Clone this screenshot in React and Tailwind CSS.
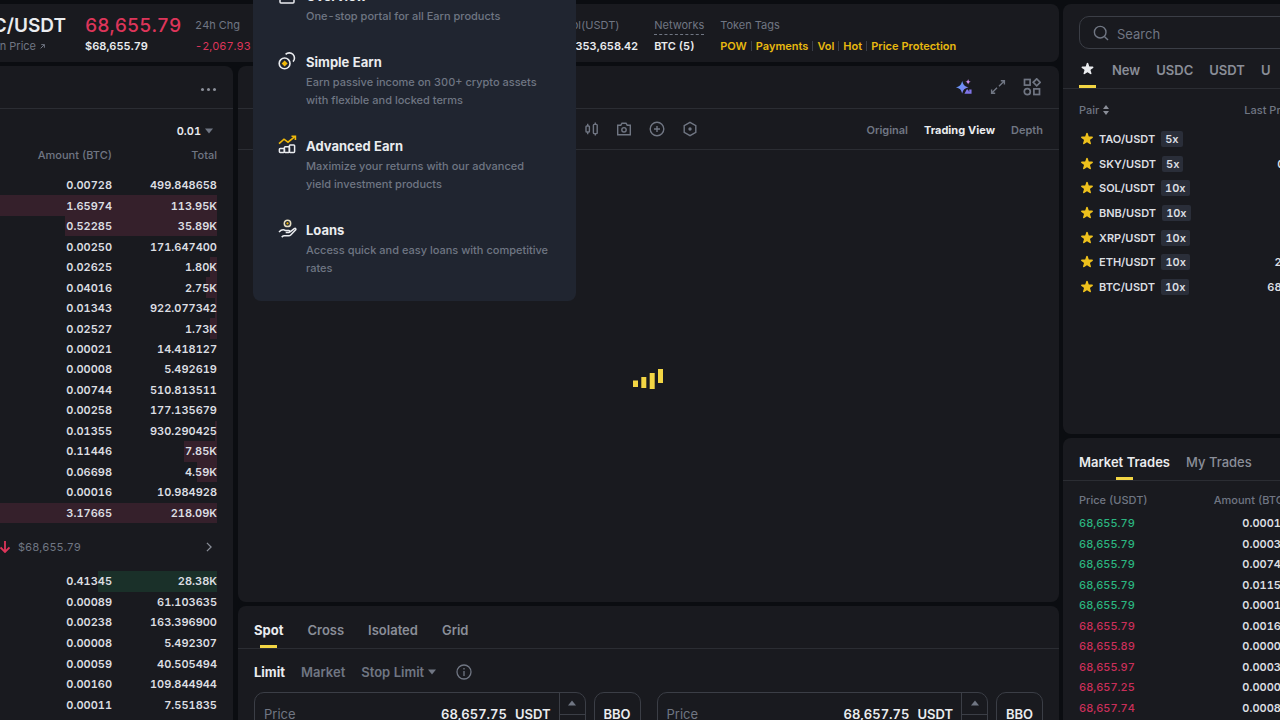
import { useState } from "react";
import { HiStar } from "react-icons/hi";

const earnMenu = [
  { title: "Overview", desc: "One-stop portal for all Earn products", icon: OverviewIcon },
  { title: "Simple Earn", desc: "Earn passive income on 300+ crypto assets with flexible and locked terms", icon: CoinsIcon },
  { title: "Advanced Earn", desc: "Maximize your returns with our advanced yield investment products", icon: GrowthIcon },
  { title: "Loans", desc: "Access quick and easy loans with competitive rates", icon: LoanIcon },
];

const asks = [
  { amount: "0.00728", total: "499.848658", depth: 0 },
  { amount: "1.65974", total: "113.95K", depth: 100 },
  { amount: "0.52285", total: "35.89K", depth: 70 },
  { amount: "0.00250", total: "171.647400", depth: 0 },
  { amount: "0.02625", total: "1.80K", depth: 3 },
  { amount: "0.04016", total: "2.75K", depth: 5 },
  { amount: "0.01343", total: "922.077342", depth: 1 },
  { amount: "0.02527", total: "1.73K", depth: 3 },
  { amount: "0.00021", total: "14.418127", depth: 0 },
  { amount: "0.00008", total: "5.492619", depth: 0 },
  { amount: "0.00744", total: "510.813511", depth: 0 },
  { amount: "0.00258", total: "177.135679", depth: 0 },
  { amount: "0.01355", total: "930.290425", depth: 1 },
  { amount: "0.11446", total: "7.85K", depth: 15 },
  { amount: "0.06698", total: "4.59K", depth: 9 },
  { amount: "0.00016", total: "10.984928", depth: 0 },
  { amount: "3.17665", total: "218.09K", depth: 100 },
];

const bids = [
  { amount: "0.41345", total: "28.38K", depth: 55 },
  { amount: "0.00089", total: "61.103635", depth: 0 },
  { amount: "0.00238", total: "163.396900", depth: 0 },
  { amount: "0.00008", total: "5.492307", depth: 0 },
  { amount: "0.00059", total: "40.505494", depth: 0 },
  { amount: "0.00160", total: "109.844944", depth: 0 },
  { amount: "0.00011", total: "7.551835", depth: 0 },
];

const pairs = [
  { name: "TAO/USDT", lever: "5x", price: "312.4" },
  { name: "SKY/USDT", lever: "5x", price: "0.07246" },
  { name: "SOL/USDT", lever: "10x", price: "84.12" },
  { name: "BNB/USDT", lever: "10x", price: "627.31" },
  { name: "XRP/USDT", lever: "10x", price: "1.4102" },
  { name: "ETH/USDT", lever: "10x", price: "2,013.45" },
  { name: "BTC/USDT", lever: "10x", price: "68,655.79" },
];

const trades = [
  { price: "68,655.79", amount: "0.00010", up: true },
  { price: "68,655.79", amount: "0.00030", up: true },
  { price: "68,655.79", amount: "0.00744", up: true },
  { price: "68,655.79", amount: "0.01150", up: true },
  { price: "68,655.79", amount: "0.00011", up: true },
  { price: "68,655.79", amount: "0.00164", up: false },
  { price: "68,655.89", amount: "0.00008", up: false },
  { price: "68,655.97", amount: "0.00030", up: false },
  { price: "68,657.25", amount: "0.00008", up: false },
  { price: "68,657.74", amount: "0.00080", up: false },
];

const tags = ["POW", "Payments", "Vol", "Hot", "Price Protection"];

function OverviewIcon() {
  return (
    <svg viewBox="0 0 20 20" className="size-5" fill="none" stroke="#eaecef" strokeWidth="1.5">
      <rect x="3" y="3" width="14" height="15" rx="1" />
      <path d="M6 8h8M6 12h8" stroke="#f0b90b" />
    </svg>
  );
}

function CoinsIcon() {
  return (
    <svg viewBox="0 0 20 20" className="size-5" fill="none" stroke="#eaecef" strokeWidth="1.6">
      <path d="M8.6 3.4A5 5 0 1 1 16 10.6" />
      <circle cx="7.6" cy="12.4" r="5.4" />
      <path d="M7.6 9.4 10.6 12.4 7.6 15.4 4.6 12.4z" fill="#f0b90b" stroke="none" />
    </svg>
  );
}

function GrowthIcon() {
  return (
    <svg viewBox="0 0 20 20" className="size-5" fill="none" stroke="#eaecef" strokeWidth="1.5">
      <path d="M2 8.6 7 4.2 11 7.2 17.6 1.8" stroke="#f0b90b" strokeWidth="1.6" />
      <path d="M14.5 1.2H18.4V5" stroke="#f0b90b" strokeWidth="1.6" />
      <rect x="2.4" y="13.4" width="5" height="4" rx=".8" />
      <rect x="7.4" y="11.8" width="5" height="5.6" rx=".8" />
      <rect x="12.4" y="10" width="5.2" height="7.4" rx=".8" />
    </svg>
  );
}

function LoanIcon() {
  return (
    <svg viewBox="0 0 20 20" className="size-5" fill="none" stroke="#eaecef" strokeWidth="1.5" strokeLinejoin="round">
      <circle cx="10.5" cy="4.4" r="3.2" stroke="#e6dfc4" />
      <circle cx="10.5" cy="4.4" r="1.1" fill="#f0b90b" stroke="none" />
      <path d="M2 13C4.5 10.4 6.5 10.2 8.5 11.6h3.4c1.2 0 1.2 1.9 0 1.9H8.7M13.1 12.8l4.2-3.2c1.2-.7 2 .4 1.2 1.4l-4.8 5c-.6.6-1.2.8-2 .8H7.3c-1 0-1.6.4-2.6 1.3" />
    </svg>
  );
}

function SparkleIcon() {
  return (
    <svg viewBox="0 0 20 20" className="size-[18px]">
      <defs>
        <linearGradient id="spark" x1="0" y1="0" x2="1" y2="1">
          <stop offset="0" stopColor="#5aa0f8" />
          <stop offset="1" stopColor="#8a78f2" />
        </linearGradient>
      </defs>
      <path d="M8 3.2c1.2 4.4 2.6 5.8 7 7-4.4 1.2-5.8 2.6-7 7-1.2-4.4-2.6-5.8-7-7 4.4-1.2 5.8-2.6 7-7z" fill="url(#spark)" />
      <path d="M14.6 1c.5 2 1.1 2.6 3.1 3.1-2 .5-2.6 1.1-3.1 3.1-.5-2-1.1-2.6-3.1-3.1 2-.5 2.6-1.1 3.1-3.1z" fill="#c58be6" />
      <path d="M10.5 17.5 13 12.8h1.4l1.4 3V12.8h2.6v4.7z" fill="#7f74e6" />
    </svg>
  );
}

function ExpandIcon() {
  return (
    <svg viewBox="0 0 16 16" className="size-4" fill="none" stroke="currentColor" strokeWidth="1.4">
      <path d="M10.8 1.8h3.6v3.6M14 2.2 9 7.2M5.2 14.2H1.6v-3.6M2 13.8l5-5" />
    </svg>
  );
}

function LayoutIcon() {
  return (
    <svg viewBox="0 0 18 18" className="size-[18px]" fill="none" stroke="currentColor" strokeWidth="1.7">
      <rect x="1.5" y="1.5" width="5.6" height="5.6" />
      <path d="M13.7.8 17.2 4.3 13.7 7.8 10.2 4.3z" />
      <circle cx="4.3" cy="13.7" r="3" />
      <rect x="10.9" y="10.9" width="5.6" height="5.6" />
    </svg>
  );
}

function CandleIcon() {
  return (
    <svg viewBox="0 0 16 16" className="size-4" fill="none" stroke="currentColor" strokeWidth="1.4">
      <rect x="3" y="5" width="3.4" height="6" rx=".8" />
      <path d="M4.7 2.8V5M4.7 11v2.2M12.3 1.4v2M12.3 12.6v2" />
      <rect x="10.4" y="3.4" width="3.8" height="9.2" rx=".8" />
    </svg>
  );
}

function CameraIcon() {
  return (
    <svg viewBox="0 0 16 16" className="size-4" fill="none" stroke="currentColor" strokeWidth="1.4">
      <path d="M1.7 4.2h3.1L6 2.2h4l1.2 2h3.1v9.6H1.7z" />
      <circle cx="8" cy="8.8" r="2.2" />
    </svg>
  );
}

function PlusCircleIcon() {
  return (
    <svg viewBox="0 0 16 16" className="size-4" fill="none" stroke="currentColor" strokeWidth="1.4">
      <circle cx="8" cy="8" r="6.8" />
      <path d="M8 5v6M5 8h6" />
    </svg>
  );
}

function HexagonIcon() {
  return (
    <svg viewBox="0 0 16 16" className="size-4" fill="none" stroke="currentColor" strokeWidth="1.4">
      <path d="M8 1.3 13.8 4.6v6.8L8 14.7 2.2 11.4V4.6z" />
      <circle cx="8" cy="8" r="1.7" fill="currentColor" stroke="none" />
    </svg>
  );
}

function Caret({ up }) {
  return (
    <svg viewBox="0 0 8 6" className="w-2 h-[6px]" fill="currentColor">
      {up ? <path d="M0 5.5 4 .5l4 5z" /> : <path d="M0 .5h8l-4 5z" />}
    </svg>
  );
}

function Stat({ label, children }) {
  return (
    <div className="shrink-0 whitespace-nowrap">
      <p className="text-[#707683]">{label}</p>
      {children}
    </div>
  );
}

function TickerBar() {
  return (
    <header className="h-[58px] shrink-0 flex items-center gap-4 pt-[5px] bg-[#191a1f] rounded-r-lg overflow-hidden leading-[21px]">
      <div className="w-[69px] shrink-0 flex flex-col items-start whitespace-nowrap">
        <h1 className="w-[66px] flex justify-end text-[19px] font-semibold">BTC/USDT</h1>
        <a href="#price" className="w-[45px] flex justify-end items-center gap-1 text-[#707683]">
          Bitcoin Price
          <svg viewBox="0 0 8 8" className="shrink-0 size-[5px]" fill="none" stroke="currentColor" strokeWidth="1.6">
            <path d="M1 7 7 1M2 1h5v5" />
          </svg>
        </a>
      </div>
      <div className="w-[94px] shrink-0">
        <p className="text-[19px] font-medium text-[#dd355a]">68,655.79</p>
        <p className="font-semibold">$68,655.79</p>
      </div>
      <div className="w-[330px] shrink-0">
        <Stat label="24h Chg">
          <p className="text-[#dd355a]">-2,067.93</p>
        </Stat>
      </div>
      <Stat label="24h Vol(USDT)">
        <p className="font-semibold">1,413,353,658.42</p>
      </Stat>
      <Stat label={<span className="border-b border-dashed border-[#707683] pb-[2px]">Networks</span>}>
        <p className="font-semibold">BTC (5)</p>
      </Stat>
      <Stat label="Token Tags">
        <ul className="flex text-[#e8b90f] font-semibold">
          {tags.map((tag, i) => (
            <li key={tag} className="flex items-center">
              {i > 0 && <i className="w-px h-[10px] mx-1 bg-[#3a3e48]" />}
              <a href="#tag">{tag}</a>
            </li>
          ))}
        </ul>
      </Stat>
    </header>
  );
}

function BookTable({ rows, color, className }) {
  return (
    <table className={`w-full font-semibold text-right text-[#dcdee2] ${className}`}>
      <tbody>
        {rows.map((row, i) => (
          <tr
            key={i}
            style={{ background: `linear-gradient(to left, ${color} ${row.depth}%, transparent ${row.depth}%)` }}
          >
            <td className="p-0 w-28">{row.amount}</td>
            <td className="p-0">{row.total}</td>
          </tr>
        ))}
      </tbody>
    </table>
  );
}

function OrderBook() {
  return (
    <section className="w-[233px] shrink-0 bg-[#191a1f] rounded-tr-lg overflow-hidden">
      <div className="h-[43px] flex items-center justify-end pr-[17px] pt-1 border-b border-[#2b2d33]">
        <button aria-label="More" className="flex gap-[3px] text-[#8a8e98]">
          <i className="size-[3px] rounded-full bg-current" />
          <i className="size-[3px] rounded-full bg-current" />
          <i className="size-[3px] rounded-full bg-current" />
        </button>
      </div>
      <div className="pr-4">
        <div className="h-8 pt-3 flex justify-end">
          <button className="flex items-center gap-1 pr-1 font-semibold">
            0.01 <span className="text-[#707683]"><Caret /></span>
          </button>
        </div>
        <div className="h-[34px] pt-[2px] flex text-right font-medium text-[#707683] leading-6">
          <span className="w-28">Amount (BTC)</span>
          <span className="flex-1">Total</span>
        </div>
        <BookTable rows={asks} color="#35202b" className="h-[348px]" />
        <div className="h-[48px] flex items-center gap-2 text-[#707683]">
          <svg viewBox="0 0 10 12" className="w-[10px] h-3" fill="none" stroke="#dd355a" strokeWidth="1.8">
            <path d="M5 0v11M.5 6.5 5 11l4.5-4.5" />
          </svg>
          <span>$68,655.79</span>
          <svg viewBox="0 0 8 12" className="ml-auto mr-1 w-2 h-[10px]" fill="none" stroke="#8a8e98" strokeWidth="1.5">
            <path d="M1.5 1 6.5 6l-5 5" />
          </svg>
        </div>
        <BookTable rows={bids} color="#1a3029" className="h-[144px]" />
      </div>
    </section>
  );
}

function Chart() {
  return (
    <section className="flex-1 flex flex-col bg-[#191a1f] rounded-lg overflow-hidden text-[#707683]">
      <div className="h-[43px] shrink-0 flex items-center justify-end gap-[17px] pr-[18px] border-b border-[#2b2d33]">
        <button aria-label="AI"><SparkleIcon /></button>
        <button aria-label="Expand"><ExpandIcon /></button>
        <button aria-label="Layout"><LayoutIcon /></button>
      </div>
      <div className="h-[41px] shrink-0 flex items-center gap-[17px] pl-[345px] pr-4 border-b border-[#2b2d33]">
        <button aria-label="Candles"><CandleIcon /></button>
        <button aria-label="Snapshot"><CameraIcon /></button>
        <button aria-label="Add"><PlusCircleIcon /></button>
        <button aria-label="Settings"><HexagonIcon /></button>
        <nav className="ml-auto pt-[2px] flex gap-4">
          <a href="#original" className="font-semibold">Original</a>
          <a href="#tv" className="font-bold text-[#eaecef]">Trading View</a>
          <a href="#depth" className="font-semibold">Depth</a>
        </nav>
      </div>
      <div className="flex-1 flex items-center justify-center pt-[6px] pr-[2px]">
        <svg viewBox="0 0 30 20" className="w-[30px] h-5" fill="#f2d544">
          <rect x="0" y="11.5" width="5" height="6.5" />
          <rect x="8.3" y="8" width="5" height="11" />
          <rect x="16.7" y="4" width="5" height="16" />
          <rect x="25" y="0" width="5" height="14" />
        </svg>
      </div>
    </section>
  );
}

function PriceField({ id }) {
  return (
    <div className="flex-1 flex gap-2">
      <div className="flex-1 h-11 flex border border-[#3b3e46] rounded-[10px] overflow-hidden">
        <label htmlFor={id} className="pl-[9px] flex items-center text-[#707683]">Price</label>
        <input
          id={id}
          defaultValue="68,657.75"
          className="flex-1 min-w-0 text-right font-semibold bg-transparent outline-none"
        />
        <span className="flex items-center pl-2 pr-2 font-semibold">USDT</span>
        <div className="w-[26px] flex flex-col border-l border-[#3b3e46] text-[#707683]">
          <button aria-label="Increase" className="flex-1 flex items-center justify-center border-b border-[#3b3e46]">
            <Caret up />
          </button>
          <button aria-label="Decrease" className="flex-1 flex items-center justify-center">
            <Caret />
          </button>
        </div>
      </div>
      <button className="w-[47px] h-11 border border-[#3b3e46] rounded-[10px] font-semibold">BBO</button>
    </div>
  );
}

function TradeForm() {
  const [tab, setTab] = useState("Spot");
  return (
    <section className="h-[114px] shrink-0 bg-[#191a1f] rounded-t-lg overflow-hidden text-[13px] leading-5">
      <div className="h-[43px] flex gap-6 px-4 border-b border-[#2b2d33] font-semibold text-[#8a8e98]">
        {["Spot", "Cross", "Isolated", "Grid"].map((t) => (
          <button
            key={t}
            onClick={() => setTab(t)}
            className={`flex flex-col items-center pt-[14px] ${t === tab ? "text-[#eaecef] font-bold" : ""}`}
          >
            {t}
            {t === tab && <i className="mt-auto w-[17px] h-[3px] bg-[#f2d544]" />}
          </button>
        ))}
      </div>
      <div className="h-[43px] pt-[3px] flex items-center gap-4 px-4 font-semibold text-[#707683]">
        <button className="text-[#eaecef] font-bold">Limit</button>
        <button>Market</button>
        <button className="flex items-center gap-1">Stop Limit <Caret /></button>
        <svg viewBox="0 0 16 16" className="size-4 ml-1" fill="none" stroke="currentColor" strokeWidth="1.3">
          <circle cx="8" cy="8" r="7" />
          <path d="M8 7v5M8 4v1.6" />
        </svg>
      </div>
      <div className="flex gap-4 px-4">
        <PriceField id="buy-price" />
        <PriceField id="sell-price" />
      </div>
    </section>
  );
}

function Markets() {
  return (
    <section className="h-[430px] shrink-0 bg-[#191a1f] rounded-l-lg overflow-hidden whitespace-nowrap">
      <div className="pt-3 pl-4">
        <label className="w-[290px] h-[33px] flex items-center gap-2 pl-[13px] border border-[#3b3e46] rounded-[10px]">
          <svg viewBox="0 0 16 16" className="size-4" fill="none" stroke="#707683" strokeWidth="1.4">
            <circle cx="7.2" cy="7.2" r="5.8" />
            <path d="m11.4 11.4 3.6 3.6" />
          </svg>
          <input aria-label="Search" placeholder="Search" className="flex-1 min-w-0 pt-[2px] text-[13px] bg-transparent outline-none placeholder:text-[#707683]" />
        </label>
      </div>
      <nav className="h-10 pl-4 flex gap-4 border-b border-[#2b2d33] text-[13px] leading-5 font-semibold text-[#8a8e98]">
        <button aria-label="Favorites" className="flex flex-col items-center pt-[12px]">
          <HiStar className="w-[17px] h-4 text-[#eaecef]" />
          <i className="mt-auto w-[17px] h-[3px] bg-[#f2d544]" />
        </button>
        <a href="#new" className="pt-[11px]">New</a>
        <a href="#usdc" className="pt-[11px]">USDC</a>
        <a href="#usdt" className="pt-[11px]">USDT</a>
        <a href="#u" className="pt-[11px]">U</a>
      </nav>
      <table className="ml-4 w-[244px]">
        <thead>
          <tr className="h-[38px] text-[#707683]">
            <th className="p-0 pt-1 font-medium text-left">
              <span className="inline-flex items-center gap-1">
                Pair
                <svg viewBox="0 0 6 10" className="w-[6px] h-[10px]" fill="#8a8e98">
                  <path d="M0 4 3 0l3 4zM0 6h6l-3 4z" />
                </svg>
              </span>
            </th>
            <th className="p-0 pt-1 font-medium text-right">Last Price / Vol</th>
          </tr>
        </thead>
      </table>
      <table className="ml-4 w-[244px] h-[172px] font-semibold text-[#dcdee2]">
        <tbody>
          {pairs.map((p) => (
            <tr key={p.name}>
              <td className="p-0">
                <div className="flex items-center">
                  <HiStar className="size-4 mr-1 text-[#edc01c]" />
                  {p.name}
                  <span className="ml-[6px] px-1 h-4 leading-4 rounded-[2px] bg-[#2a2e39]">{p.lever}</span>
                </div>
              </td>
              <td className="p-0 text-right">{p.price}</td>
            </tr>
          ))}
        </tbody>
      </table>
    </section>
  );
}

function MarketTrades() {
  return (
    <section className="flex-1 bg-[#191a1f] rounded-tl-lg overflow-hidden whitespace-nowrap">
      <div className="h-[43px] pl-4 flex gap-4 border-b border-[#2b2d33] text-[13px] leading-5 font-medium text-[#8a8e98]">
        <button className="flex flex-col items-center pt-[14px] text-[#eaecef] font-semibold">
          Market Trades
          <i className="mt-auto w-[17px] h-[3px] bg-[#f2d544]" />
        </button>
        <button className="flex pt-[14px]">My Trades</button>
      </div>
      <table className="ml-4 w-[209px]">
        <thead>
          <tr className="h-8 text-[#707683]">
            <th className="p-0 pt-[6px] font-medium text-left">Price (USDT)</th>
            <th className="p-0 pt-[6px] font-medium text-right">Amount (BTC)</th>
          </tr>
        </thead>
      </table>
      <table className="ml-4 w-[209px] h-[205px]">
        <tbody>
          {trades.map((t, i) => (
            <tr key={i}>
              <td className={`p-0 font-medium ${t.up ? "text-[#2bb47f]" : "text-[#c92f5a]"}`}>{t.price}</td>
              <td className="p-0 text-right font-semibold text-[#dcdee2]">{t.amount}</td>
            </tr>
          ))}
        </tbody>
      </table>
    </section>
  );
}

function EarnMenu() {
  return (
    <ul className="absolute left-[253px] -top-10 w-[323px] pt-[25px] pb-6 pl-6 pr-[26px] flex flex-col gap-[26px] bg-[#202530] rounded-lg">
      {earnMenu.map(({ title, desc, icon: Icon }) => (
        <li key={title}>
          <a href="#earn" className="flex gap-[9px]">
            <span className="shrink-0"><Icon /></span>
            <span>
              <b className="block text-[13px] leading-[22px] font-bold">{title}</b>
              <span className="block leading-[18px] font-medium text-[#6f7683]">{desc}</span>
            </span>
          </a>
        </li>
      ))}
    </ul>
  );
}

export default function App() {
  return (
    <div className="relative h-screen pt-1 flex gap-1 overflow-hidden bg-[#0b0d11] text-[#eaecef] text-[11px] leading-4 font-[Inter,sans-serif] tabular-nums">
      <main className="flex-1 min-w-0 flex flex-col gap-1">
        <TickerBar />
        <div className="flex-1 min-h-0 flex gap-[5px]">
          <OrderBook />
          <div className="flex-1 min-w-0 flex flex-col gap-1">
            <Chart />
            <TradeForm />
          </div>
        </div>
      </main>
      <aside className="w-[217px] shrink-0 flex flex-col gap-1">
        <Markets />
        <MarketTrades />
      </aside>
      <EarnMenu />
    </div>
  );
}
